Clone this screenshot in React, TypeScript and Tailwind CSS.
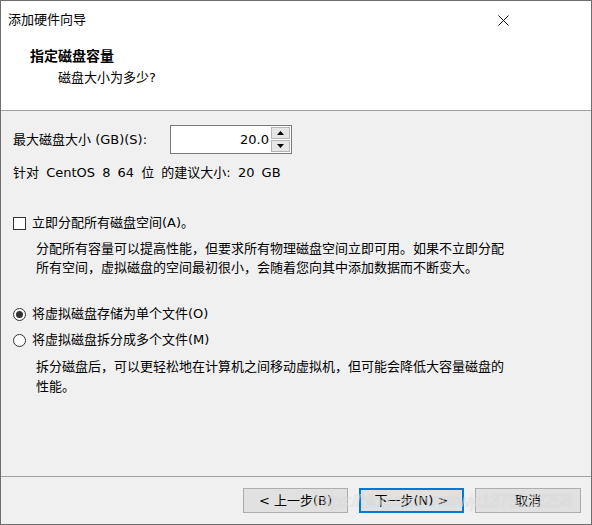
export default function App() {
  return (
    <div className="w-[592px] h-[525px] flex flex-col border border-[#6e6e6e] bg-white text-black text-[13px] font-['DejaVu_Sans','Noto_Sans_CJK_SC',sans-serif] overflow-hidden">
      {/* Title bar */}
      <div className="h-[37px] flex items-center justify-between pl-[7px] pr-[82px] bg-white">
        <span className="text-[13px] leading-[20px]">添加硬件向导</span>
        <svg width="11" height="11" viewBox="0 0 11 11" className="mt-[1px]">
          <path d="M0.5 0.5 L10.5 10.5 M10.5 0.5 L0.5 10.5" stroke="#111" strokeWidth="1" />
        </svg>
      </div>

      {/* Header */}
      <div className="h-[72px] bg-white">
        <div className="pl-[29px] pt-[8px] text-[14px] font-bold leading-[20px]">指定磁盘容量</div>
        <div className="pl-[57px] mt-[2px] leading-[20px]">磁盘大小为多少?</div>
      </div>
      <div className="h-px bg-[#a0a0a0]" />

      {/* Body */}
      <div className="flex-1 bg-[#f0f0f0] pl-[12px] pr-[10px]">
        <div className="mt-[14px] h-[29px] flex items-center">
          <span className="w-[157px] leading-[20px]">最大磁盘大小 (GB)(S):</span>
          <div className="w-[122px] h-[29px] border border-[#7a7a7a] bg-white flex items-stretch">
            <div className="flex-1 text-right pr-[2px] leading-[27px]">20.0</div>
            <div className="w-[20px] flex flex-col gap-px py-px pr-px">
              <div className="flex-1 bg-[#e6e6e6] border border-[#b5b5b5] flex items-center justify-center">
                <svg width="7" height="4" viewBox="0 0 7 4"><path d="M3.5 0 L7 4 L0 4 Z" fill="#000" /></svg>
              </div>
              <div className="flex-1 bg-[#e6e6e6] border border-[#b5b5b5] flex items-center justify-center">
                <svg width="7" height="4" viewBox="0 0 7 4"><path d="M0 0 L7 0 L3.5 4 Z" fill="#000" /></svg>
              </div>
            </div>
          </div>
        </div>

        <div className="mt-[9px] leading-[20px] [word-spacing:3px]">针对 CentOS 8 64 位 的建议大小: 20 GB</div>

        <div className="mt-[30px] h-[20px] flex items-center">
          <span className="w-[13px] h-[13px] border border-[#333] bg-white" />
          <span className="ml-[6px] leading-[20px]">立即分配所有磁盘空间(A)。</span>
        </div>
        <div className="mt-[6px] pl-[23px] leading-[19px]">
          分配所有容量可以提高性能，但要求所有物理磁盘空间立即可用。如果不立即分配
          <br />
          所有空间，虚拟磁盘的空间最初很小，会随着您向其中添加数据而不断变大。
        </div>

        <div className="mt-[24px] h-[26px] flex items-center">
          <span className="w-[13px] h-[13px] rounded-full border border-[#333] bg-white flex items-center justify-center">
            <span className="w-[7px] h-[7px] rounded-full bg-[#333]" />
          </span>
          <span className="ml-[6px] leading-[20px]">将虚拟磁盘存储为单个文件(O)</span>
        </div>
        <div className="h-[26px] flex items-center">
          <span className="w-[13px] h-[13px] rounded-full border border-[#333] bg-white" />
          <span className="ml-[6px] leading-[20px]">将虚拟磁盘拆分成多个文件(M)</span>
        </div>
        <div className="mt-[4px] pl-[23px] leading-[20px]">
          拆分磁盘后，可以更轻松地在计算机之间移动虚拟机，但可能会降低大容量磁盘的
          <br />
          性能。
        </div>
      </div>

      <div className="h-px bg-[#a0a0a0]" />

      {/* Footer */}
      <div className="relative h-[47px] bg-[#f0f0f0] flex justify-end items-start pt-[11px] pr-[10px] gap-[11px]">
        <button className="w-[105px] h-[25px] bg-[#e1e1e1] border border-[#adadad] leading-[23px]">&lt; 上一步(B)</button>
        <button className="w-[105px] h-[25px] bg-[#e1e1e1] border-2 border-[#0078d7] leading-[21px]">下一步(N) &gt;</button>
        <button className="w-[106px] h-[25px] bg-[#e1e1e1] border border-[#adadad] leading-[23px]">取消</button>
        <span className="absolute left-[313px] top-[13px] text-[18px] leading-[22px] tracking-[-1px] font-['Liberation_Sans',sans-serif] text-white/40 [text-shadow:0_0_1px_rgba(150,150,150,0.35)] pointer-events-none whitespace-nowrap">
          https://blog.csdn.net/wjc1375302258
        </span>
      </div>
    </div>
  );
}
